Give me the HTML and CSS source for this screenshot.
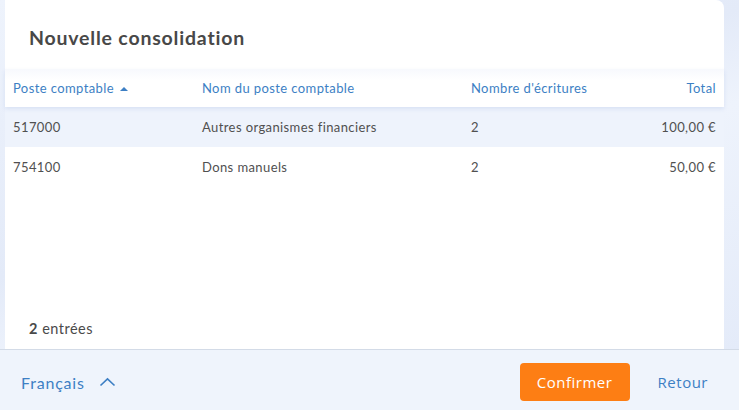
FILE: index.html
```html
<!DOCTYPE html>
<html lang="fr">
<head>
    <meta charset="UTF-8">
    <title>Nouvelle consolidation</title>
    <link rel="stylesheet" href="styles.css">
</head>
<body>
    <div class="page">
        <div class="card">
            <h1 class="title">Nouvelle consolidation</h1>

            <!-- Table of accounting entries -->
            <div class="table">
                <div class="row head">
                    <div class="cell c1">Poste comptable <span class="sort"></span></div>
                    <div class="cell c2">Nom du poste comptable</div>
                    <div class="cell c3">Nombre d'écritures</div>
                    <div class="cell c4">Total</div>
                </div>
                <div class="row odd">
                    <div class="cell c1">517000</div>
                    <div class="cell c2">Autres organismes financiers</div>
                    <div class="cell c3">2</div>
                    <div class="cell c4">100,00 €</div>
                </div>
                <div class="row">
                    <div class="cell c1">754100</div>
                    <div class="cell c2">Dons manuels</div>
                    <div class="cell c3">2</div>
                    <div class="cell c4">50,00 €</div>
                </div>
            </div>

            <div class="count"><b>2</b> entrées</div>
        </div>
    </div>

    <div class="footer">
        <div class="lang">Français
            <svg width="17" height="10" viewBox="0 0 17 10"><path d="M1.5 8.5 L8.5 1.8 L15.5 8.5" fill="none" stroke="#3d7fc4" stroke-width="1.6"/></svg>
        </div>
        <div class="actions">
            <button class="btn-confirm">Confirmer</button>
            <button class="btn-back">Retour</button>
        </div>
    </div>
</body>
</html>
```

FILE: styles.css
```css
body {
    margin: 0;
    width: 739px;
    height: 410px;
    overflow: hidden;
    font-family: Lato, "Noto Sans", sans-serif;
    background: #e8eefa;
}

.page {
    height: 349px;
    padding: 0 15px 0 5px;
    background: linear-gradient(160deg, #eef3fc 0%, #e3eaf8 45%, #eef3fc 60%, #e4ebf9 100%);
}

.card {
    height: 349px;
    background: #fff;
    border-radius: 0 8px 0 0;
    display: flex;
    flex-direction: column;
}

.title {
    margin: 0;
    padding: 26px 0 0 24px;
    height: 43px;
    font-size: 19.5px;
    font-weight: bold;
    letter-spacing: 0.8px;
    color: #484848;
}

.table {
    font-size: 13px;
    letter-spacing: 0.4px;
}

.row {
    display: flex;
    align-items: center;
    height: 40px;
    color: #505050;
}

.row.head {
    height: 38px;
    color: #3d7fc4;
    background: linear-gradient(#f7f9fd, #fff 30%);
    position: relative;
    z-index: 1;
    box-shadow: 0 2px 4px rgba(120, 150, 210, 0.18);
}

.row.odd {
    background: #eef3fc;
}

.cell.c1 { width: 189px; padding-left: 8px; }
.cell.c2 { width: 269px; }
.cell.c3 { width: 150px; }
.cell.c4 { flex: 1; text-align: right; padding-right: 8px; }

.sort {
    display: inline-block;
    width: 0;
    height: 0;
    margin-left: 2px;
    vertical-align: 2px;
    border-style: solid;
    border-width: 0 4px 4px 4px;
    border-color: transparent transparent #3d7fc4 transparent;
}

.count {
    margin-top: auto;
    padding: 0 0 12px 24px;
    font-size: 14.5px;
    letter-spacing: 0.5px;
    color: #4a4a4a;
}

.footer {
    height: 60px;
    border-top: 1px solid #d3dbe7;
    background: #eff4fc;
    display: flex;
    align-items: center;
    justify-content: space-between;
    padding: 0 31px 0 21px;
}

.lang {
    color: #3d7fc4;
    font-size: 16px;
    letter-spacing: 0.8px;
    display: flex;
    align-items: center;
    gap: 14px;
    padding-top: 4px;
}

.actions {
    display: flex;
    align-items: center;
    gap: 28px;
    padding-top: 4px;
}

.btn-confirm {
    width: 110px;
    height: 38px;
    border: none;
    border-radius: 4px;
    background: #fd7e14;
    color: #fff;
    font-family: "Open Sans", sans-serif;
    font-size: 15px;
    letter-spacing: 0.5px;
}

.btn-back {
    border: none;
    background: none;
    padding: 0;
    color: #3d7fc4;
    font-family: "Open Sans", sans-serif;
    font-size: 15px;
    letter-spacing: 0.5px;
}
```
